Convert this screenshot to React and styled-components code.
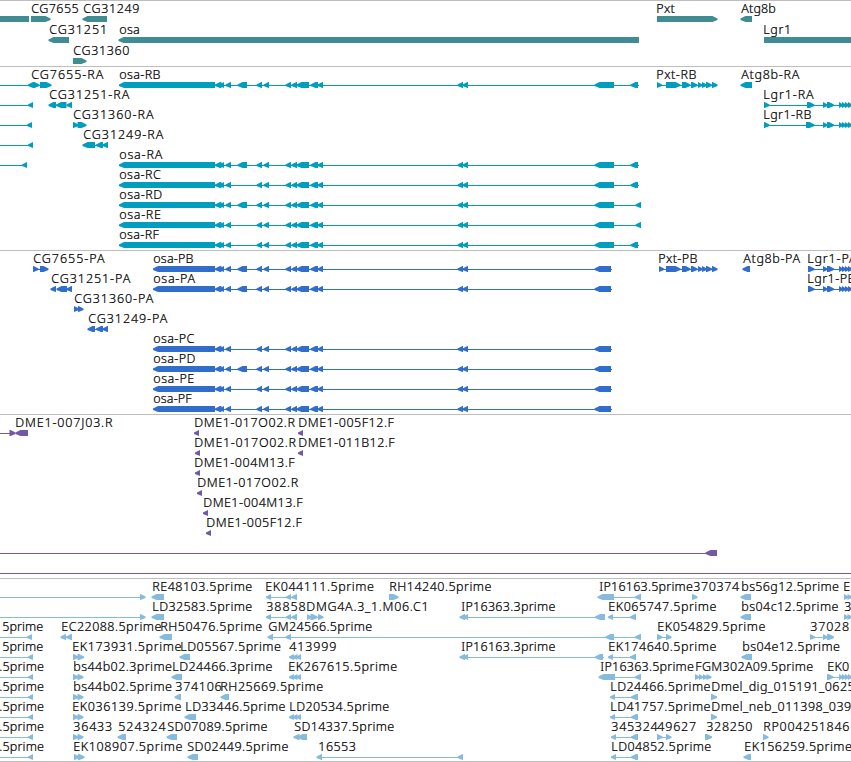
import React from "react";
import styled, { createGlobalStyle } from "styled-components";

const FONT_SIZE = 12.5;
const FONT_WEIGHT = 300;
const FONT_FAMILY = '"Noto Sans", "DejaVu Sans", sans-serif';
const WIDTH = 851;

const GlobalStyle = createGlobalStyle`
  body {
    margin: 0;
    background: #fff;
    overflow: hidden;
  }
`;

const Browser = styled.main`
  display: flex;
  flex-direction: column;
  width: ${WIDTH}px;
  height: 762px;
  box-sizing: border-box;
  overflow: hidden;
  border-bottom: 1px solid #bebebe;
  background: #fff;
`;

const TrackBox = styled.section`
  flex: none;
  display: flex;
  flex-direction: column;
  padding: 1px 0 ${(p) => p.$end}px;
  border-top: 1px solid #bebebe;
  color: ${(p) => p.$color};
`;

const Lane = styled.div`
  position: relative;
  display: flex;
  flex-direction: column;
  flex: none;
  height: ${(p) => p.$height}px;
`;

const LabelStrip = styled.div`
  height: 14px;
`;

const Label = styled.span`
  position: absolute;
  top: -2px;
  line-height: 18px;
  font-family: ${FONT_FAMILY};
  font-size: ${FONT_SIZE}px;
  font-weight: ${FONT_WEIGHT};
  -webkit-text-stroke: 0.22px #000;
  color: #000;
  white-space: pre;
`;

const Glyphs = styled.svg`
  display: block;
  width: ${WIDTH}px;
  height: 6px;
  fill: currentColor;
`;

const context = document.createElement("canvas").getContext("2d");

// Spreads the letters so that the ink of the label runs from `from` to `to`.
function fitLabel(text, from, to) {
  context.font = `${FONT_WEIGHT} ${FONT_SIZE}px ${FONT_FAMILY}`;
  const m = context.measureText(text);
  const start = Math.floor(from) + 0.3;
  const ink = m.actualBoundingBoxLeft + m.actualBoundingBoxRight;
  const gaps = text.length - 1;
  return {
    left: start + m.actualBoundingBoxLeft,
    letterSpacing: gaps > 0 ? (to - start - ink) / gaps : 0,
  };
}

function FeatureLabel({ text, from, to }) {
  return <Label style={fitLabel(text, from, to)}>{text}</Label>;
}

function Exon({ dir, from, to }) {
  if (dir === "B") return <rect x={from} y="0" width={to - from} height="6" />;
  const head = Math.min(5, to - from);
  const d =
    dir === "L"
      ? `M${to} 0H${from + head}L${from} 2.4V3.9L${from + head} 6H${to}Z`
      : `M${from} 0H${to - head}L${to} 2.4V3.9L${to - head} 6H${from}Z`;
  return <path d={d} />;
}

function Feature({ dir, line, exons }) {
  return (
    <g>
      {line && <rect x={line[0]} y="3" width={line[1] - line[0]} height="1" />}
      {exons.map(([from, to, own]) => (
        <Exon key={from} dir={own || dir} from={from} to={to} />
      ))}
    </g>
  );
}

const f = (dir, exons, line) => ({ dir, exons, line });
const L = (...exons) => f("L", exons);
const R = (...exons) => f("R", exons);
const LL = (from, to, ...exons) => f("L", exons, [from, to]);
const RL = (from, to, ...exons) => f("R", exons, [from, to]);

const osa = (start, extra, last, end) =>
  LL(start, end,
    [start, 215], [215, 221.5], [219.5, 224], [225.5, 231],
    ...(extra ? [[237.5, 247]] : []),
    [256.5, 262], [263.5, 269], [285.5, 291], [291.5, 297], [296.5, 309],
    [310.5, 318], [317.5, 323], [457.5, 463], [462.5, 468], ...last);
const osaR = (extra, longEnd) =>
  osa(119, extra, [[594.5, 614], longEnd ? [635.5, 641] : [630.5, 638]], longEnd ? 641 : 639);
const osaP = (extra) => osa(153, extra, [[594.5, 611]], 612);

const pxt = (start) =>
  RL(start, 717, [start, start + 5], [666, 680.5], [682, 690.5], [691, 697.5],
    [698, 702.5], [702, 707], [706, 712], [712, 717.5]);
const lgrTail = [[823, 827.5], [827, 834], [839, 843], [842, 846], [845, 849], [848, 852]];
const leftEdge = (x) => LL(0, x, [x, x + 5]);
const end5 = LL(266, 297, [266, 271], [286, 291], [291.5, 297]);
const triple = L([289, 294], [292.5, 297.5], [296.5, 301]);
const tail = (start, last, end) => LL(start, end, [start, start + 5], [last, end]);

const TRACKS = [
  {
    name: "genes", color: "#3f8c93", pitch: 21, end: 1,
    lanes: [
      {
        labels: [["CG7655", 31.5, 78.5], ["CG31249", 83.7, 139.3], ["Pxt", 657, 674.5], ["Atg8b", 741.3, 775.3]],
        features: [f("B", [[0, 29]]), R([31, 50.5]), L([82.5, 107]), R([657, 717.5]), L([740.5, 752])],
      },
      {
        labels: [["CG31251", 49.7, 105], ["osa", 119.7, 139], ["Lgr1", 764, 789]],
        features: [L([48.5, 69]), L([118.5, 639]), f("B", [[764, 851]])],
      },
      { labels: [["CG31360", 73.7, 129.3]], features: [R([73, 86.5])] },
    ],
  },
  {
    name: "transcripts", color: "#009dbf", pitch: 20, end: 2,
    lanes: [
      {
        labels: [["CG7655-RA", 31.5, 103.7], ["osa-RB", 119.7, 160.5], ["Pxt-RB", 657, 696.5], ["Atg8b-RA", 741.3, 799.7]],
        features: [RL(0, 41, [28, 33.5, "L"], [33, 39.5], [40, 51.5]), osaR(true, false), pxt(657), L([740.5, 752])],
      },
      {
        labels: [["CG31251-RA", 49.7, 129.7], ["Lgr1-RA", 764, 814]],
        features: [leftEdge(28), L([48.5, 56], [56, 66.5], [66.5, 72]), RL(764, 851, [764, 769.5], [807, 814.5], ...lgrTail)],
      },
      {
        labels: [["CG31360-RA", 73.7, 154], ["Lgr1-RB", 764, 811.5]],
        features: [leftEdge(27), R([73, 78.5], [77.5, 86.5]), RL(764, 851, [764, 769.5], [806, 814.5], ...lgrTail)],
      },
      { labels: [["CG31249-RA", 83.7, 163.7]], features: [leftEdge(28), LL(90, 107, [82.5, 95], [96, 103], [102.5, 108])] },
      { labels: [["osa-RA", 119.7, 162.7]], features: [leftEdge(22), osaR(true, false)] },
      { labels: [["osa-RC", 119.7, 161]], features: [osaR(false, false)] },
      { labels: [["osa-RD", 119.7, 162.3]], features: [osaR(true, true)] },
      { labels: [["osa-RE", 119.7, 161]], features: [osaR(false, true)] },
      { labels: [["osa-RF", 119.7, 159.5]], features: [osaR(false, false)] },
    ],
  },
  {
    name: "proteins", color: "#316dcb", pitch: 20, end: 2,
    lanes: [
      {
        labels: [["CG7655-PA", 33.7, 105], ["osa-PB", 153.7, 193.5], ["Pxt-PB", 659, 697.5], ["Atg8b-PA", 743.3, 800.5], ["Lgr1-PA", 808, 857]],
        features: [RL(33, 45, [33, 38.5], [40, 48.5]), osaP(true), pxt(659), L([742.5, 750]), RL(808, 851, [808, 814.5], ...lgrTail)],
      },
      {
        labels: [["CG31251-PA", 51.7, 130.7], ["osa-PA", 153.7, 195.5], ["Lgr1-PB", 808, 855.5]],
        features: [L([50.5, 56], [56.5, 67], [66.5, 72]), osaP(true), RL(808, 851, [808, 814.5], ...lgrTail)],
      },
      { labels: [["CG31360-PA", 74.7, 153.7]], features: [R([74, 79], [78, 83.5])] },
      { labels: [["CG31249-PA", 88.7, 167.7]], features: [LL(90, 107, [87.5, 95], [96, 103], [102.5, 108])] },
      { labels: [["osa-PC", 153.7, 194.5]], features: [osaP(false)] },
      { labels: [["osa-PD", 153.7, 195.5]], features: [osaP(true)] },
      { labels: [["osa-PE", 153.7, 194.3]], features: [osaP(false)] },
      { labels: [["osa-PF", 153.7, 192.3]], features: [osaP(false)] },
    ],
  },
  {
    name: "clone ends", color: "#7358a6", pitch: 20, end: 2,
    lanes: [
      {
        labels: [["DME1-007J03.R", 16.7, 113], ["DME1-017O02.R", 195, 295.5], ["DME1-005F12.F", 299, 394.5]],
        features: [RL(0, 10, [9.5, 15.5]), L([15.5, 28]), L([194, 199]), L([298, 303])],
      },
      {
        labels: [["DME1-017O02.R", 195.7, 296.5], ["DME1-011B12.F", 299, 395.3]],
        features: [L([195, 200]), L([298, 303])],
      },
      { labels: [["DME1-004M13.F", 195.7, 295.3]], features: [L([195, 200])] },
      { labels: [["DME1-017O02.R", 198, 298.7]], features: [L([197, 202])] },
      { labels: [["DME1-004M13.F", 204, 303.3]], features: [L([203, 208])] },
      { labels: [["DME1-005F12.F", 207, 302.5]], features: [L([206, 211])] },
      { labels: [], features: [LL(0, 717, [705.5, 717])] },
      { labels: [], features: [LL(0, 851)] },
    ],
  },
  {
    name: "ESTs", color: "#87bbdd", pitch: 20, end: 1,
    lanes: [
      {
        labels: [["RE48103.5prime", 153, 252.3], ["EK044111.5prime", 266.7, 374], ["RH14240.5prime", 390, 491.5], ["IP16163.5prime", 599, 693], ["370374", 693, 739], ["bs56g12.5prime", 742, 839], ["E", 844.8, 851]],
        features: [RL(0, 145, [140, 145.5]), L([151.5, 164]), end5, R([389, 398.5]), LL(598, 641, [597.5, 614], [635, 641]), R([692, 697.5]), L([740.5, 751]), R([844, 848.5], [847.5, 852])],
      },
      {
        labels: [["LD32583.5prime", 153, 252.3], ["38858", 266.7, 305.5], ["DMG4A.3_1.M06.C1", 307.7, 426.5], ["IP16363.3prime", 461, 555.5], ["EK065747.5prime", 609, 716.5], ["bs04c12.5prime", 742, 838.5], ["3", 844.8, 850.5]],
        features: [RL(0, 145, [140, 145.5]), L([151.5, 164]), end5, RL(307, 320, [307, 311.5], [310.5, 317.5], [318, 323.5]), LL(460, 605, [459.5, 465], [463, 468], [595, 605]), tail(608, 630, 636), L([740.5, 751]), R([844, 848.5], [847.5, 852])],
      },
      {
        labels: [["5prime", 2.3, 43.3], ["EC22088.5prime", 62, 161.5], ["RH50476.5prime", 161.3, 262.3], ["GM24566.5prime", 268.7, 372.3], ["EK054829.5prime", 658, 765.5], ["37028", 810.7, 849]],
        features: [leftEdge(27), L([60.5, 66], [66, 72]), L([159.5, 172]), LL(268, 641, [267.5, 273], [285.5, 291], [605.5, 614], [635, 641]), RL(657, 670, [657, 662.5], [666, 671.5]), RL(810, 830, [810, 815], [823, 827.5], [827, 834])],
      },
      {
        labels: [["5prime", 2.3, 43.3], ["EK173931.5prime", 73.7, 181.5], ["LD05567.5prime", 181.3, 281], ["413999", 289.7, 336.3], ["IP16163.3prime", 461, 555.5], ["EK174640.5prime", 609, 716.5], ["bs04e12.5prime", 743, 840]],
        features: [leftEdge(28), R([73, 78.5], [77.5, 84]), L([179.5, 190]), triple, LL(460, 604, [459.5, 465], [463, 468], [595, 603]), tail(608, 630, 636), L([741.5, 752])],
      },
      {
        labels: [[".5prime", -0.3, 44], ["bs44b02.3prime", 74, 172], ["LD24466.3prime", 173, 272.5], ["EK267615.5prime", 289.7, 397.3], ["IP16363.5prime", 600, 694], ["FGM302A09.5prime", 696, 813.3], ["EK0", 828, 849]],
        features: [leftEdge(28), R([73, 78.5], [77.5, 83.5]), L([171.5, 182]), triple, LL(599, 641, [598.5, 615], [635, 641]), R([695, 699.5], [699, 703.5], [703, 707.5], [706.5, 711.5]), RL(827, 851, [827, 833.5], ...lgrTail.slice(2))],
      },
      {
        labels: [[".5prime", -0.3, 44], ["bs44b02.5prime", 74, 172], ["374106", 175.7, 221.5], ["RH25669.5prime", 221.7, 323.3], ["LD24466.5prime", 611, 710.5], ["Dmel_dig_015191_0625", 712, 854.5]],
        features: [leftEdge(28), R([73, 78.5], [77.5, 83.5]), L([174.5, 181]), L([220.5, 229]), tail(610, 631, 638), R([711, 717])],
      },
      {
        labels: [[".5prime", -0.3, 44], ["EK036139.5prime", 73.7, 181.5], ["LD33446.5prime", 186, 285.5], ["LD20534.5prime", 290, 389.3], ["LD41757.5prime", 611, 710.5], ["Dmel_neb_011398_039", 712, 851]],
        features: [leftEdge(28), R([73, 78.5], [77.5, 83.5]), L([184.5, 196]), triple, tail(610, 631, 638), R([711, 717])],
      },
      {
        labels: [[".5prime", -0.3, 44], ["36433", 73.7, 112], ["524324", 118.7, 165.5], ["SD07089.5prime", 167, 267.5], ["SD14337.5prime", 294, 394.3], ["345324", 611.7, 657.5], ["49627", 657.7, 696], ["328250", 706, 752.3], ["RP004251846", 764.3, 849.3]],
        features: [leftEdge(28), R([73, 78.5], [77.5, 83.5]), L([117.5, 126]), L([166.5, 177]), L([293.5, 299.5], [297.5, 307]), tail(611, 631, 638), RL(657, 670, [657, 662.5], [666, 671.5]), R([705, 712]), R([763, 768.5])],
      },
      {
        labels: [[".5prime", -0.3, 44], ["EK108907.5prime", 74.7, 182.5], ["SD02449.5prime", 187.7, 288.5], ["16553", 319, 355.7], ["LD04852.5prime", 612, 711.3], ["EK156259.5prime", 745, 852]],
        features: [leftEdge(28), R([74, 79.5], [78, 84.5]), L([187.5, 198]), LL(317, 463, [316.5, 322], [457.5, 463]), tail(611, 631, 638), L([743.5, 751])],
      },
    ],
  },
];

function Track({ color, pitch, end, lanes }) {
  return (
    <TrackBox $color={color} $end={end}>
      {lanes.map(({ labels, features }, i) => (
        <Lane key={i} $height={pitch}>
          <LabelStrip>
            {labels.map(([text, from, to]) => (
              <FeatureLabel key={from} text={text} from={from} to={to} />
            ))}
          </LabelStrip>
          <Glyphs viewBox={`0 0 ${WIDTH} 6`} aria-hidden="true">
            {features.map((feature, j) => (
              <Feature key={j} {...feature} />
            ))}
          </Glyphs>
        </Lane>
      ))}
    </TrackBox>
  );
}

export default function App() {
  return (
    <>
      <GlobalStyle />
      <Browser>
        {TRACKS.map((track) => (
          <Track key={track.name} {...track} />
        ))}
      </Browser>
    </>
  );
}
